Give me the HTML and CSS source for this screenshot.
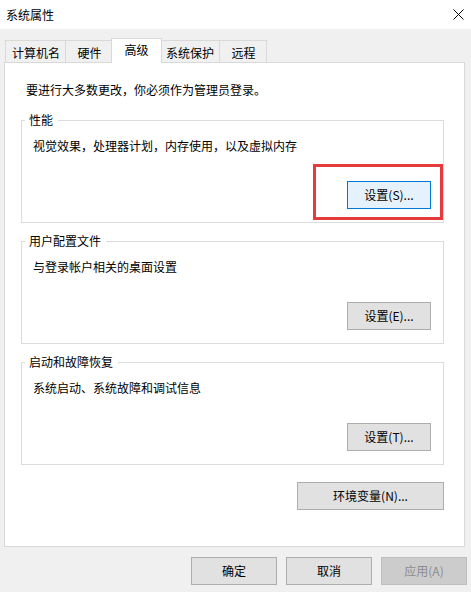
FILE: index.html
```html
<!DOCTYPE html>
<html lang="zh-CN">
<head>
  <meta charset="UTF-8" />
  <meta name="viewport" content="width=device-width, initial-scale=1.0" />
  <title>系统属性</title>
  <link rel="stylesheet" href="styles.css">
</head>
<body>

  <div class="titlebar">
    <span class="title">系统属性</span>
    <svg class="close" width="11" height="11" viewBox="0 0 11 11">
      <path d="M0.5 0.5 L10.5 10.5 M10.5 0.5 L0.5 10.5" stroke="#000" stroke-width="1" fill="none" />
    </svg>
  </div>

  <!-- Tabs -->
  <div class="tabs">
    <div class="tab first">计算机名</div>
    <div class="tab">硬件</div>
    <div class="tab active">高级</div>
    <div class="tab">系统保护</div>
    <div class="tab">远程</div>
  </div>

  <div class="panel">
    <p class="intro">要进行大多数更改，你必须作为管理员登录。</p>

    <fieldset class="group">
      <legend>性能</legend>
      <p class="desc">视觉效果，处理器计划，内存使用，以及虚拟内存</p>
      <div class="group-actions">
        <span class="marked">
          <button class="btn focused">设置(S)...</button>
        </span>
      </div>
    </fieldset>

    <fieldset class="group">
      <legend>用户配置文件</legend>
      <p class="desc">与登录帐户相关的桌面设置</p>
      <div class="group-actions">
        <button class="btn">设置(E)...</button>
      </div>
    </fieldset>

    <fieldset class="group">
      <legend>启动和故障恢复</legend>
      <p class="desc">系统启动、系统故障和调试信息</p>
      <div class="group-actions">
        <button class="btn">设置(T)...</button>
      </div>
    </fieldset>

    <div class="env-row">
      <button class="btn wide">环境变量(N)...</button>
    </div>
  </div>

  <!-- Dialog buttons -->
  <div class="footer">
    <button class="btn dlg">确定</button>
    <button class="btn dlg">取消</button>
    <button class="btn dlg" disabled>应用(A)</button>
  </div>

</body>
</html>
```

FILE: styles.css
```css
body {
  margin: 0;
  padding: 0;
  width: 471px;
  height: 592px;
  overflow: hidden;
  background-color: #f0f0f0;
  font-family: "Noto Sans CJK SC", "Liberation Sans", sans-serif;
  font-size: 12px;
  color: #000;
}

.titlebar {
  height: 29px;
  background: #fff;
  display: flex;
  align-items: center;
  justify-content: space-between;
  padding: 0 7px 0 6px;
}

.title {
  line-height: 16px;
}

.close {
  display: block;
}

.tabs {
  display: flex;
  padding-left: 5px;
  margin-top: 11px;
  height: 22px;
  position: relative;
  z-index: 1;
}

.tab {
  box-sizing: border-box;
  min-width: 47px;
  height: 22px;
  padding: 1px 5px 0 6px;
  line-height: 21px;
  text-align: center;
  border-top: 1px solid #d9d9d9;
  border-right: 1px solid #d9d9d9;
  background: #f0f0f0;
}

.tab.first {
  border-left: 1px solid #d9d9d9;
}

.tab.active {
  margin: -2px -2px 0;
  height: 25px;
  min-width: 51px;
  padding: 0 8px;
  line-height: 22px;
  background: #fff;
  border-left: 1px solid #d9d9d9;
  position: relative;
  z-index: 2;
}

.panel {
  box-sizing: border-box;
  height: 485px;
  margin: 0 6px 0 4px;
  padding: 19px 20px 0 16px;
  background: #fff;
  border: 1px solid #d9d9d9;
}

.intro {
  margin: 0 0 14px 5px;
  line-height: 16px;
}

.group {
  margin: 0 0 10px;
  padding: 0 12px 13px 11px;
  border: 1px solid #dcdcdc;
  min-inline-size: 0;
}

.group:last-of-type {
  margin-bottom: 0;
}

.group legend {
  margin-left: -8px;
  padding: 0 5px 0 4px;
  line-height: 16px;
}

.desc {
  margin: 10px 0 0;
  line-height: 16px;
}

.group-actions {
  display: flex;
  justify-content: flex-end;
  margin-top: 27px;
}

.marked {
  position: relative;
  display: inline-block;
}

/* red highlight box drawn over the screenshot */
.marked::after {
  content: "";
  position: absolute;
  top: -17px;
  right: -12px;
  bottom: -11px;
  left: -34px;
  border: 3px solid #e53b3b;
  pointer-events: none;
}

.env-row {
  display: flex;
  justify-content: flex-end;
  margin-top: 17px;
}

.btn {
  box-sizing: border-box;
  display: block;
  width: 84px;
  height: 28px;
  padding: 0;
  font-family: inherit;
  font-size: 12px;
  color: #000;
  background: #e1e1e1;
  border: 1px solid #adadad;
  border-radius: 0;
  line-height: 16px;
}

.btn.focused {
  background: #e5f1fb;
  border-color: #0078d7;
}

.btn.wide {
  width: 147px;
}

.footer {
  display: flex;
  justify-content: flex-end;
  gap: 9px;
  margin-top: 10px;
  padding-right: 4px;
}

.btn.dlg {
  width: 86px;
}

.btn:disabled {
  background: #cccccc;
  border-color: #bfbfbf;
  color: #8c8c8c;
}
```
